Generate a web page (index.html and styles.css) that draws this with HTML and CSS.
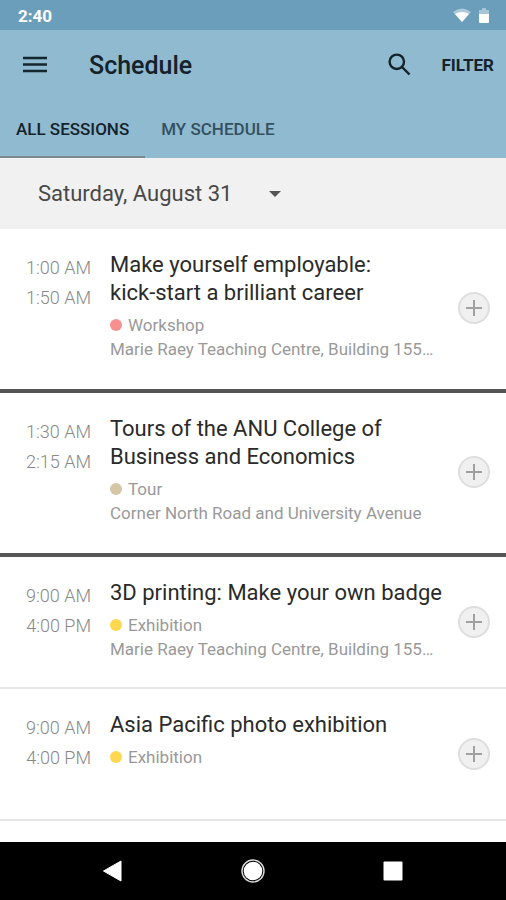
FILE: index.html
```html
<!DOCTYPE html>
<html lang="en">
<head>
<meta charset="utf-8">
<meta name="viewport" content="width=device-width, initial-scale=1">
<title>Schedule</title>
<link rel="stylesheet" href="styles.css">
</head>
<body>
<div class="status">
  <span>2:40</span>
  <svg width="38" height="18" viewBox="0 0 38 18" aria-hidden="true">
    <path d="M1 5Q10 -2 19 5L10 15Z" fill="#fff" opacity=".45"/>
    <path d="M3 7Q10 3 17 7L10 15Z" fill="#fff"/>
    <path d="M27 7V3h3V1h4v2h3v4Z" fill="#fff" opacity=".4"/>
    <path d="M27 7h10v8q0 1-1 1h-8q-1 0-1-1Z" fill="#fff"/>
  </svg>
</div>
<header class="header">
  <div class="toolbar">
    <button class="icon-button" type="button" aria-label="Menu">
      <svg width="24" height="18" viewBox="0 0 24 18"><path d="M0 2h24M0 8.500h24M0 15h24" stroke="#14262e" stroke-width="2.4"/></svg>
    </button>
    <h1 class="title">Schedule</h1>
    <button class="icon-button" type="button" aria-label="Search">
      <svg width="24" height="24" viewBox="0 0 24 24" fill="none" stroke="#14222b" stroke-width="2.4"><circle cx="9.800" cy="8.800" r="7.200"/><path d="M15 14L22.500 21.500"/></svg>
    </button>
    <button class="filter" type="button">FILTER</button>
  </div>
  <nav class="tabs">
    <a class="tab tab-active" href="#all" aria-current="page">ALL SESSIONS</a>
    <a class="tab" href="#mine">MY SCHEDULE</a>
  </nav>
</header>
<div class="date">
  <select class="date-select" aria-label="Date"><option>Saturday, August 31</option></select>
  <svg class="date-arrow" width="12" height="6" viewBox="0 0 12 6" aria-hidden="true"><path d="M0 0h12L6 6Z" fill="#555"/></svg>
</div>
<main class="sessions" id="all">
  <article class="session slot-end">
    <div class="times"><time>1:00 AM</time><time>1:50 AM</time></div>
    <div class="details">
      <h2 class="name">Make yourself employable: <span class="keep">kick-start</span> a brilliant career</h2>
      <p class="kind workshop">Workshop</p>
      <p class="place">Marie Raey Teaching Centre, Building 155…</p>
    </div>
    <button class="add" type="button" aria-label="Add session"><svg width="16" height="16" viewBox="0 0 16 16"><path d="M8 0v16M0 8h16" stroke="#a0a0a0" stroke-width="2"/></svg></button>
  </article>
  <article class="session slot-end">
    <div class="times"><time>1:30 AM</time><time>2:15 AM</time></div>
    <div class="details">
      <h2 class="name">Tours of the ANU College of Business and Economics</h2>
      <p class="kind tour">Tour</p>
      <p class="place">Corner North Road and University Avenue</p>
    </div>
    <button class="add" type="button" aria-label="Add session"><svg width="16" height="16" viewBox="0 0 16 16"><path d="M8 0v16M0 8h16" stroke="#a0a0a0" stroke-width="2"/></svg></button>
  </article>
  <article class="session">
    <div class="times"><time>9:00 AM</time><time>4:00 PM</time></div>
    <div class="details">
      <h2 class="name">3D printing: Make your own badge</h2>
      <p class="kind exhibition">Exhibition</p>
      <p class="place">Marie Raey Teaching Centre, Building 155…</p>
    </div>
    <button class="add" type="button" aria-label="Add session"><svg width="16" height="16" viewBox="0 0 16 16"><path d="M8 0v16M0 8h16" stroke="#a0a0a0" stroke-width="2"/></svg></button>
  </article>
  <article class="session">
    <div class="times"><time>9:00 AM</time><time>4:00 PM</time></div>
    <div class="details">
      <h2 class="name">Asia Pacific photo exhibition</h2>
      <p class="kind exhibition">Exhibition</p>
      <p class="place"></p>
    </div>
    <button class="add" type="button" aria-label="Add session"><svg width="16" height="16" viewBox="0 0 16 16"><path d="M8 0v16M0 8h16" stroke="#a0a0a0" stroke-width="2"/></svg></button>
  </article>
</main>
<footer class="system">
  <button class="icon-button" type="button" aria-label="Back"><svg width="24" height="24" viewBox="0 0 24 24"><path d="M2.500 12L20 2v20Z" fill="#fff" stroke="#fff" stroke-linejoin="round"/></svg></button>
  <button class="icon-button" type="button" aria-label="Home"><svg width="24" height="24" viewBox="0 0 24 24"><circle cx="12" cy="12" r="11" fill="none" stroke="#ddd" stroke-width="1.400"/><circle cx="12" cy="12" r="9.300" fill="#fff"/></svg></button>
  <button class="icon-button" type="button" aria-label="Recent apps"><svg width="24" height="24" viewBox="0 0 24 24"><rect x="2.500" y="2.500" width="19" height="19" rx="1" fill="#fff"/></svg></button>
</footer>
</body>
</html>
```
FILE: styles.css
```css
* { box-sizing: border-box; }

body {
  margin: 0;
  min-height: 100vh;
  display: flex;
  flex-direction: column;
  background: #fff;
  font-family: Roboto, "Liberation Sans", sans-serif;
}

h1, h2, p { margin: 0; }

button {
  padding: 0;
  border: 0;
  background: none;
  font: inherit;
  color: inherit;
}

button svg { display: block; }

.status {
  display: flex;
  align-items: center;
  justify-content: space-between;
  height: 30px;
  padding: 2px 16px 0 18px;
  background: #6b9eba;
  color: #fff;
  font-size: 17px;
  font-weight: 700;
}

.header {
  background: #8fbad0;
  color: #14222b;
}

.toolbar {
  display: flex;
  align-items: center;
  height: 70px;
  padding: 0 12px 0 23px;
}

.title {
  flex: 1;
  margin-left: 42px;
  font-size: 25px;
  font-weight: 500;
}

.filter {
  margin-left: 30px;
  font-size: 17px;
  font-weight: 700;
}

.tabs {
  display: flex;
  height: 58px;
}

.tab {
  padding: 0 16px;
  border-bottom: 2px solid transparent;
  color: #35505e;
  font-size: 17px;
  font-weight: 500;
  line-height: 58px;
  text-decoration: none;
}

.tab-active {
  border-color: #7c8790;
  color: #14222b;
}

.date {
  display: flex;
  align-items: center;
  gap: 36px;
  height: 71px;
  padding: 1px 0 0 38px;
  background: #f1f1f1;
}

.date-select {
  appearance: none;
  padding: 0;
  border: 0;
  background: none;
  color: #484848;
  font: 400 22px/32px Roboto, "Liberation Sans", sans-serif;
}

.sessions { flex: 1; }

.session {
  display: flex;
  padding: 22px 16px 26px 0;
  border-bottom: 2px solid #e6e6e6;
}

.slot-end {
  padding-bottom: 28px;
  border-bottom: 4px solid #555;
}

.times {
  flex: 0 0 91px;
  display: flex;
  flex-direction: column;
  padding-top: 2px;
  color: #888;
  font-size: 18px;
  font-weight: 300;
  line-height: 30px;
  text-align: right;
}

.details {
  flex: 1;
  min-width: 0;
  padding-left: 19px;
  color: #999;
  font-size: 17px;
  line-height: 24px;
}

.name {
  margin-bottom: 6px;
  color: #2a2a2a;
  font-size: 22px;
  font-weight: 400;
  line-height: 28px;
}

.keep { white-space: nowrap; }

.kind {
  display: flex;
  align-items: center;
  gap: 6px;
}

.kind::before {
  content: "";
  width: 12px;
  height: 12px;
  border-radius: 50%;
  background: currentColor;
}

.workshop::before { background: #fa8f8f; }
.tour::before { background: #d5c7a5; }
.exhibition::before { background: #ffd84f; }

.place {
  min-height: 24px;
  overflow: hidden;
  text-overflow: ellipsis;
  white-space: nowrap;
}

.add {
  flex: none;
  align-self: center;
  display: grid;
  place-items: center;
  width: 32px;
  height: 32px;
  margin-top: 4px;
  border: 2px solid #dedede;
  border-radius: 50%;
  background: #f0f0f0;
}

.system {
  display: flex;
  align-items: center;
  justify-content: center;
  gap: 116px;
  height: 58px;
  background: #000;
}
```
